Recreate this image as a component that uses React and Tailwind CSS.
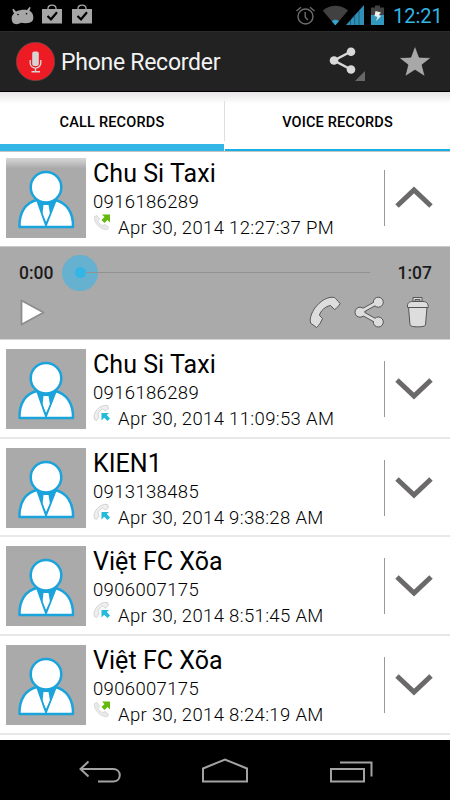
const records = [
  { name: 'Chu Si Taxi', phone: '0916186289', date: 'Apr 30, 2014 11:09:53 AM', outgoing: false },
  { name: 'KIEN1', phone: '0913138485', date: 'Apr 30, 2014 9:38:28 AM', outgoing: false },
  { name: 'Việt FC Xõa', phone: '0906007175', date: 'Apr 30, 2014 8:51:45 AM', outgoing: false },
  { name: 'Việt FC Xõa', phone: '0906007175', date: 'Apr 30, 2014 8:24:19 AM', outgoing: true },
]

function StatusBar() {
  return (
    <div className="flex h-[31px] shrink-0 items-center bg-black">
      <svg className="h-[31px] w-[100px]" viewBox="0 0 100 31">
        <path d="M12 21C11.200 17.500 12 15 14 13.500L12.300 9.500L13.500 8.800L16 11.500C19 10 24 9.500 27 10L29.500 7L30.700 7.500L29.500 10.800C33 12.500 34 17 33 20C31.500 23.800 25 23.300 21 22.800C18 24.800 13 24.800 12 21Z" fill="#a6a6a6" />
        <circle cx="18" cy="14.500" r=".8" />
        <circle cx="26.500" cy="13.800" r=".8" />
        {[42, 72].map((x) => (
          <g key={x} transform={`translate(${x} 0)`}>
            <path d="M0 9H20V23.500H0Z" fill="#a6a6a6" />
            <path d="M6 10V8.500C6 4 14 4 14 8.500V10" fill="none" stroke="#a6a6a6" strokeWidth="1.300" />
            <path d="M5.500 16L9 19.300L15 12.300" fill="none" stroke="#000" strokeWidth="2.200" />
          </g>
        ))}
      </svg>
      <svg className="ml-auto h-[31px] w-[92px]" viewBox="295 0 92 31">
        <g fill="none" stroke="#6d6d6d" strokeWidth="1.400">
          <circle cx="305.500" cy="16.500" r="7.500" />
          <path d="M305.200 12V17L307.800 20M296.500 11L301 7.300M310 7.300L314.500 11" />
        </g>
        <path d="M322.700 10.500C330 4 341 4 348 10.500L335.300 25.500Z" fill="#414141" />
        <path d="M331.800 21.300C334 19.300 337 19.300 338.900 21.300L335.300 25.300Z" fill="#33a5cf" />
        <path d="M346 25L364 5V25Z" fill="#2f8fb5" />
        <path d="M350.500 20V25M354.700 15V25M359 11V25" stroke="#14586f" strokeWidth=".8" />
        <path d="M371 7.500H375V5.500H380V7.500H384V25H371Z" fill="#414141" />
        <path d="M371 15H384V25H371Z" fill="#3199c0" />
        <path d="M375.500 11L381 12.500L379 15L381 16L376 21L377.500 17L374.500 16Z" fill="#eee" />
      </svg>
      <span className="ml-[6px] w-[57px] pt-[2px] text-[20px] leading-[29px] text-[#33b5e5]">12:21</span>
    </div>
  )
}

function ActionBar() {
  return (
    <div className="flex h-[60px] shrink-0 items-center border-t border-[#2b2b2b] bg-[#222] pl-4">
      <svg className="size-[39px]" viewBox="0 0 39 39">
        <circle cx="19.500" cy="19.500" r="19.200" fill="#ed1c24" stroke="#555" strokeWidth=".6" />
        <rect x="16.200" y="9.500" width="6.600" height="14.500" rx="2" fill="#d9d4d4" />
        <path d="M14.200 18V21C14.200 27.800 24.800 27.800 24.800 21V18M19.500 26V29.500M15.500 29.700H24" fill="none" stroke="#d9d4d4" strokeWidth="1.400" />
      </svg>
      <h1 className="ml-[6px] pt-[2px] text-[23px] leading-[30px] tracking-[-0.270px] whitespace-nowrap text-[#f3f3f3]">Phone Recorder</h1>
      <svg className="ml-auto h-[59px] w-[125px]" viewBox="325 32 125 59">
        <path d="M351 51.500L334 60.500L351 69.500" fill="none" stroke="#d8d8d8" strokeWidth="2.500" />
        <g fill="#d8d8d8">
          <circle cx="351" cy="51.700" r="4.300" />
          <circle cx="334" cy="60.500" r="4.300" />
          <circle cx="351" cy="69.500" r="4.300" />
        </g>
        <path d="M365 71V81H355Z" fill="#686868" />
        <path d="M415 46L419.200 57.200L431 57.800L422 64.800L425 76.500L415 70L405 76.500L408 64.800L399 57.800L410.800 57.200Z" fill="#a8a8a8" stroke="#111" strokeWidth=".6" />
      </svg>
    </div>
  )
}

function Tabs() {
  return (
    <div className="flex h-[61px] shrink-0 border-t border-b border-t-black border-b-[#c4c4c4] bg-linear-to-b from-[#e6e4e6] via-white via-20% to-white text-[14.500px] font-medium text-black">
      <div className="flex w-56 items-center justify-center border-b-[7px] border-[#33b5e5] pt-[9px] tracking-[0.200px]">
        CALL RECORDS
      </div>
      <div className="mt-[9px] h-10 w-px bg-[#dedede]" />
      <div className="flex flex-1 items-center justify-center border-b-2 border-[#15b1e5] pt-[4px] tracking-[0.150px]">
        VOICE RECORDS
      </div>
    </div>
  )
}

function Avatar({ shaded }) {
  return (
    <div className={shaded ? 'size-20 shrink-0 bg-linear-to-b from-[#d8d8d8] to-[#aaa] to-13%' : 'size-20 shrink-0 bg-[#aaa]'}>
      <svg className="size-20" viewBox="0 0 80 80">
        <path d="M13.500 69C13 54 20 44.500 31 42H49C60 44.500 67.500 54 67 69Z" fill="#fff" stroke="#1ba3dc" strokeWidth="2.500" strokeLinejoin="round" />
        <path d="M31 42L40 67.500L50 42Z" fill="#1ba3dc" />
        <path d="M37.500 47H42.500L44 56L40 64L36.500 56Z" fill="#fff" />
        <path d="M31 42L40 67.500L50 42" fill="none" stroke="#1ba3dc" strokeWidth="1.800" />
        <circle cx="40" cy="29.200" r="15.300" fill="#fff" stroke="#1ba3dc" strokeWidth="2.500" />
      </svg>
    </div>
  )
}

function CallIcon({ outgoing }) {
  return outgoing ? (
    <svg className="-mt-[2px] size-[18px]" viewBox="0 0 18 18">
      <path d="M1.500 3.500L4 2.500L6.500 6L5 8.500C6 10.500 8 12 10 12.500L12 11.500L15.500 14L14.500 16.500C9 18 0 10 1.500 3.500Z" fill="#e9e9e9" stroke="#cacaca" strokeWidth=".6" />
      <path d="M9 1.500H17V9.500L14.500 7L11.500 10L8.500 7L11.500 4Z" fill="#65b80c" />
    </svg>
  ) : (
    <svg className="-mt-[2px] size-[18px]" viewBox="0 0 18 18">
      <path d="M1.500 15.500C-1 9 7 0 14.500 1.500L15.500 4.500L12.500 7L9.500 5C7.500 6 5.500 8 5 10L6 13L3.500 16.500Z" fill="#efefef" stroke="#c4c4c4" strokeWidth=".7" />
      <path d="M8.500 9H16L13.800 11L17 14.500L14.500 17L11.200 13.700L8.500 16.500Z" fill="#25b9da" />
    </svg>
  )
}

function RecordRow({ record, expanded }) {
  return (
    <div className={expanded ? 'flex h-[95px] shrink-0 border-b border-[#c9c9c9] pt-[5.500px] pl-[6px]' : 'flex h-[98.700px] shrink-0 border-b-2 border-[#e8e8e8] pt-[9px] pl-[6px]'}>
      <Avatar shaded={expanded} />
      <div className="ml-[7px] flex-1 whitespace-nowrap text-black">
        <p className="text-[25px] leading-[31px] tracking-[0.050px]">{record.name}</p>
        <p className="text-[18.500px] leading-[26px] font-light tracking-[0.340px]">{record.phone}</p>
        <div className="flex h-[26px]">
          <CallIcon outgoing={record.outgoing} />
          <p className="ml-[7px] text-[18.500px] leading-[26px] font-light tracking-[0.340px]">{record.date}</p>
        </div>
      </div>
      <div className="mt-[12px] h-14 w-px bg-[#999]" />
      <svg className="mt-[12px] mr-[12px] ml-[5px] h-14 w-12" viewBox="0 0 48 56">
        <path d={expanded ? 'M7 36L24 20L41 36' : 'M7 19L24 35L41 19'} fill="none" stroke="#6b6969" strokeWidth="5" />
      </svg>
    </div>
  )
}

function Player() {
  return (
    <div className="h-[93px] shrink-0 border-b border-[#d5d5d5] bg-[#aaa]">
      <div className="flex h-[51px] items-center pr-[18px] pl-[19px] text-[17.500px] font-medium text-[#1c1c1c]">
        <span className="w-[43px] pt-px">0:00</span>
        <div className="flex size-9 shrink-0 items-center justify-center rounded-full bg-[#65b1cf]">
          <div className="size-[11px] rounded-full bg-[#33b5e5]" />
        </div>
        <div className="-ml-3 h-px w-[284px] bg-[#929292]" />
        <span className="ml-auto pt-px">1:07</span>
      </div>
      <div className="flex h-10 items-start justify-between pr-[20px] pl-5">
        <svg className="h-[28px] w-[26px]" viewBox="20 298 26 28">
          <path d="M21.500 300.500L43.500 312.500L21.500 324.500Z" fill="#fff" stroke="#8d8d8d" strokeWidth="1.800" strokeLinejoin="round" />
        </svg>
        <svg className="-mt-[2px] h-[34px] w-[122px]" viewBox="308 296 122 34" fill="#ddd" stroke="#555" strokeWidth="1" strokeLinejoin="round">
          <path d="M310.500 323C308 312 323 295 334.500 297.500C336 299 338 301 340 303.500C339 306 337 308 334.500 309.500L330.500 305.500C326 306 320 311 319.500 315.500L322.500 318.500C321 322 319.500 325 316.500 327.500Z" />
          <path d="M378 302L360 312L378 322" fill="none" strokeWidth="4.500" />
          <circle cx="378.300" cy="302.200" r="5" />
          <circle cx="360" cy="312.200" r="5" />
          <circle cx="378.300" cy="322" r="5" />
          <path d="M378 302L360 312L378 322" fill="none" stroke="#ddd" strokeWidth="2.600" />
          <path d="M413 302V297.500H422V302H420V299.500H415V302Z" />
          <path d="M408.500 307H427L425.500 325C425 327.500 410.500 327.500 410 325Z" />
          <path d="M407.500 307.500C407 303 409 301.500 413 301.500H423C427 301.500 428.500 304 428.200 307.500Z" />
        </svg>
      </div>
    </div>
  )
}

function NavBar() {
  return (
    <div className="flex h-[60px] shrink-0 bg-black">
      <svg className="h-[60px] w-full" viewBox="0 740 450 60" fill="none" stroke="#a3a3a3" strokeWidth="2">
        <path d="M88.500 761.500L80.500 769L88.500 776.500M80.500 769H113C122 769 122 781.500 113 781.500H98" />
        <path d="M203 768.500L225 759.500L247 768.500V781.500H203Z" />
        <path d="M331 769H364V781.500H331ZM340 762.500H371.500V776.500" />
      </svg>
    </div>
  )
}

export default function App() {
  return (
    <div className="flex h-[800px] w-[450px] flex-col overflow-hidden bg-white font-['Roboto',sans-serif]">
      <StatusBar />
      <ActionBar />
      <Tabs />
      <RecordRow
        record={{ name: 'Chu Si Taxi', phone: '0916186289', date: 'Apr 30, 2014 12:27:37 PM', outgoing: true }}
        expanded
      />
      <Player />
      {records.map((record) => (
        <RecordRow key={record.date} record={record} />
      ))}
      <div className="min-h-0 flex-1" />
      <NavBar />
    </div>
  )
}
